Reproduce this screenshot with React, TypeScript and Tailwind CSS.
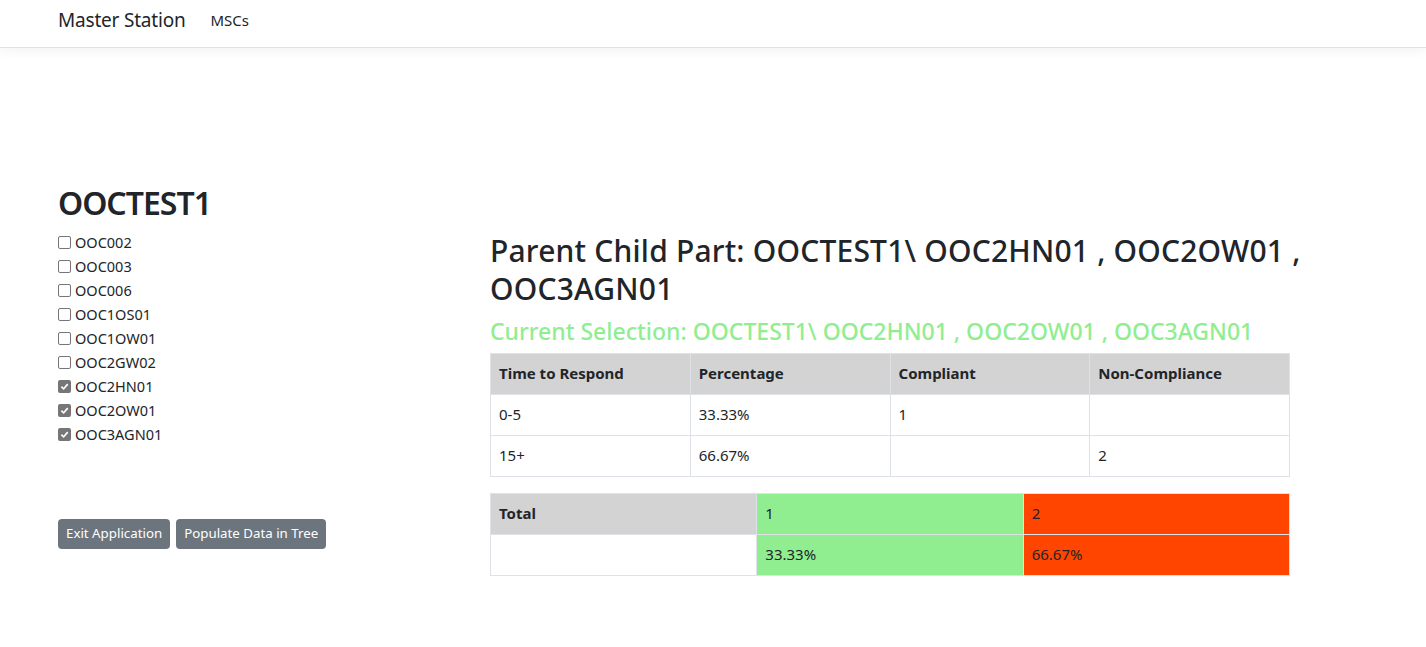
import React from "react";

const stations = [
  { name: "OOC002", checked: false },
  { name: "OOC003", checked: false },
  { name: "OOC006", checked: false },
  { name: "OOC1OS01", checked: false },
  { name: "OOC1OW01", checked: false },
  { name: "OOC2GW02", checked: false },
  { name: "OOC2HN01", checked: true },
  { name: "OOC2OW01", checked: true },
  { name: "OOC3AGN01", checked: true },
];

const rows = [
  { time: "0-5", pct: "33.33%", ok: "1", bad: "" },
  { time: "15+", pct: "66.67%", ok: "", bad: "2" },
];

const Check = ({ checked }: { checked: boolean }) =>
  checked ? (
    <span className="w-[13px] h-[13px] rounded-[2px] bg-[#767676] flex items-center justify-center shrink-0">
      <svg width="9" height="9" viewBox="0 0 10 10">
        <path d="M1.5 5.2 L4 7.6 L8.6 2.4" fill="none" stroke="#fff" strokeWidth="1.8" />
      </svg>
    </span>
  ) : (
    <span className="w-[13px] h-[13px] rounded-[2px] border border-[#767676] bg-white shrink-0" />
  );

export default function App() {
  return (
    <div
      className="min-h-screen bg-white text-[#212529]"
      style={{ fontFamily: '"Noto Sans", "Open Sans", sans-serif' }}
    >
      <nav className="h-12 border-b border-[#dee2e6] shadow-[0_2px_12px_rgba(0,0,0,0.06)] flex items-center px-[58px] pb-[6px]">
        <span className="text-[19px] tracking-[-0.2px] leading-none mr-[17px]">Master Station</span>
        <span className="text-[15px] leading-none px-2">MSCs</span>
      </nav>

      <div className="flex px-[58px] pt-[136px]">
        <div className="w-[432px] shrink-0">
          <h2 className="text-[32px] font-semibold tracking-[-1px] leading-[1.2] mb-2">OOCTEST1</h2>
          <div className="flex flex-col">
            {stations.map((s) => (
              <label key={s.name} className="h-6 flex items-center gap-1 text-[14.5px]">
                <Check checked={s.checked} />
                <span>{s.name}</span>
              </label>
            ))}
          </div>
          <div className="flex gap-[6px] mt-[73px]">
            <button className="h-[30px] px-2 rounded bg-[#6c757d] text-white text-[13.3px]">
              Exit Application
            </button>
            <button className="h-[30px] px-2 rounded bg-[#6c757d] text-white text-[13.3px]">
              Populate Data in Tree
            </button>
          </div>
        </div>

        <div className="w-[830px] pt-[48px]">
          <h2 className="text-[30px] font-medium tracking-[0.2px] leading-[38.4px] mb-2">
            Parent Child Part: OOCTEST1\ OOC2HN01 , OOC2OW01 , OOC3AGN01
          </h2>
          <h4 className="text-[23px] font-medium leading-[28.8px] mb-[7px] text-[#90ee90]">
            Current Selection: OOCTEST1\ OOC2HN01 , OOC2OW01 , OOC3AGN01
          </h4>
          <div className="w-[800px]">
            <table className="w-full border-collapse table-fixed text-[15px] mb-4">
              <thead>
                <tr className="bg-[#d3d3d3]">
                  {["Time to Respond", "Percentage", "Compliant", "Non-Compliance"].map((h) => (
                    <th key={h} className="border border-[#dee2e6] h-[41px] px-2 text-left font-bold">
                      {h}
                    </th>
                  ))}
                </tr>
              </thead>
              <tbody>
                {rows.map((r) => (
                  <tr key={r.time}>
                    <td className="border border-[#dee2e6] h-[41px] px-2">{r.time}</td>
                    <td className="border border-[#dee2e6] h-[41px] px-2">{r.pct}</td>
                    <td className="border border-[#dee2e6] h-[41px] px-2">{r.ok}</td>
                    <td className="border border-[#dee2e6] h-[41px] px-2">{r.bad}</td>
                  </tr>
                ))}
              </tbody>
            </table>
            <table className="w-full border-collapse table-fixed text-[15px]">
              <tbody>
                <tr>
                  <td className="border border-[#dee2e6] h-[41px] px-2 bg-[#d3d3d3] font-bold">Total</td>
                  <td className="border border-[#dee2e6] h-[41px] px-2 bg-[#90ee90]">1</td>
                  <td className="border border-[#dee2e6] h-[41px] px-2 bg-[#ff4500]">2</td>
                </tr>
                <tr>
                  <td className="border border-[#dee2e6] h-[41px] px-2"></td>
                  <td className="border border-[#dee2e6] h-[41px] px-2 bg-[#90ee90]">33.33%</td>
                  <td className="border border-[#dee2e6] h-[41px] px-2 bg-[#ff4500]">66.67%</td>
                </tr>
              </tbody>
            </table>
          </div>
        </div>
      </div>
    </div>
  );
}
